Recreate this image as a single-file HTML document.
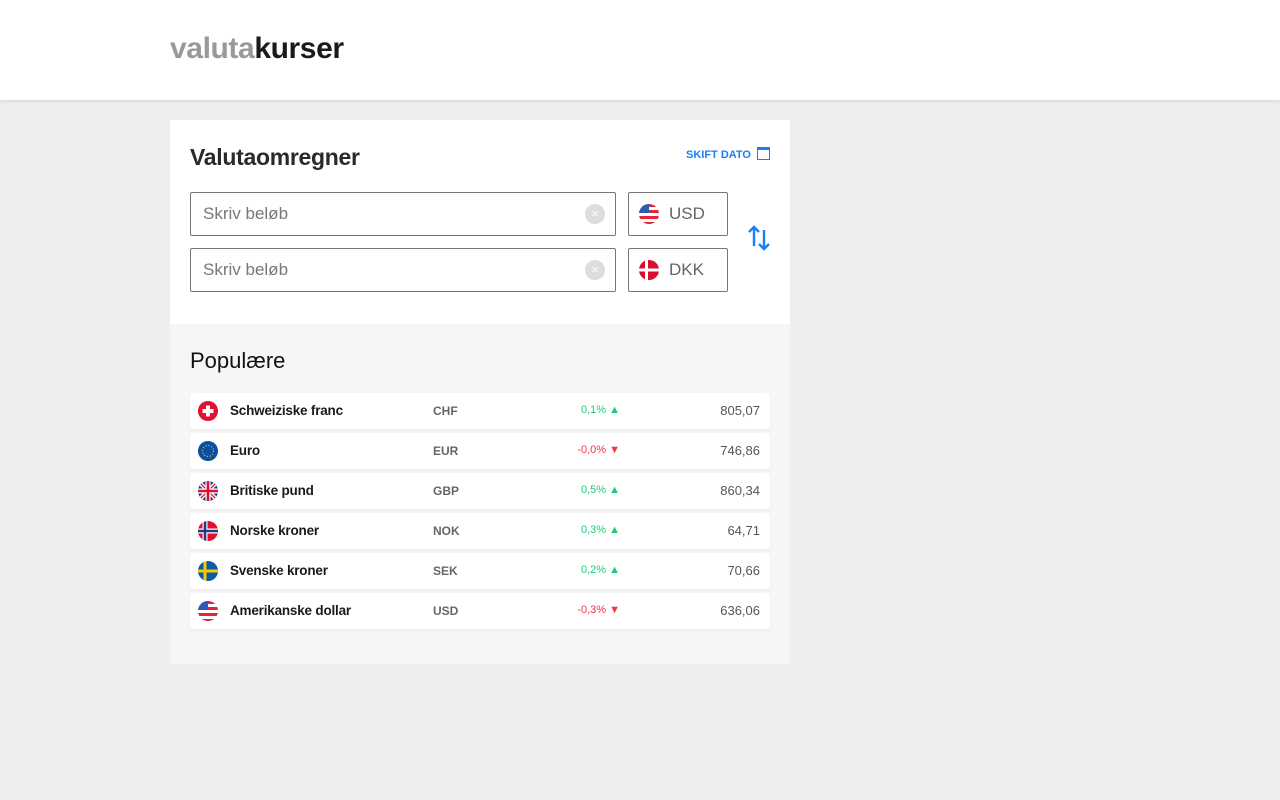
<!DOCTYPE html>
<html><head><meta charset="utf-8"><style>
*{box-sizing:border-box;margin:0;padding:0}
body{width:1280px;height:800px;background:#eee;font-family:"Liberation Sans",sans-serif;position:relative;overflow:hidden}
.hdr{position:absolute;left:0;top:0;width:1280px;height:100px;background:#fff;box-shadow:0 1px 4px rgba(0,0,0,.12)}
.logo{position:absolute;left:170px;top:32px;font-size:30px;font-weight:bold;letter-spacing:-0.4px}
.logo .a{color:#999}.logo .b{color:#1a1a1a}
.card{position:absolute;left:170px;top:120px;width:620px;height:204px;background:#fff}
h1{position:absolute;left:20px;top:24px;font-size:23px;color:#2a2a2a;font-weight:bold;letter-spacing:-.3px}
.skift{position:absolute;left:516px;top:29px;font-size:11px;font-weight:bold;color:#1a7ef5}
.cal{position:absolute;left:587px;top:27px;width:13px;height:13px;border:1.5px solid #1a7ef5;border-top-width:3px}
.inp{position:absolute;left:20px;width:426px;height:44px;border:1px solid #777;border-radius:2px;font-size:17px;color:#777;padding:11px 12px}
.clr{position:absolute;right:10px;top:11px;width:20px;height:20px;border-radius:50%;background:#ddd;color:#fff;font-size:13px;text-align:center;line-height:20px}
.cur{position:absolute;left:458px;width:100px;height:44px;border:1px solid #777;border-radius:2px;font-size:17px;color:#666;padding:11px 0 0 40px}
.cur svg{position:absolute;left:10px;top:11px}
.pop{position:absolute;left:170px;top:324px;width:620px;height:340px;background:#f6f6f6}
h2{position:absolute;left:20px;top:24px;font-size:22px;color:#111;font-weight:normal}
.row{position:absolute;left:20px;width:580px;height:36px;background:#fff;border-radius:4px;box-shadow:0 1px 2px rgba(0,0,0,.06);font-size:13px}
.row svg{position:absolute;left:8px;top:8px}
.nm{position:absolute;left:40px;top:10px;font-weight:bold;color:#1a1a1a;font-size:13.5px;letter-spacing:-0.2px}
.cd{position:absolute;left:243px;top:11px;color:#666;font-size:12px;font-weight:bold}
.ch{position:absolute;right:150px;top:11px;font-size:11px}
.g{color:#1fcc7a}.r{color:#f0344b}
.v{position:absolute;right:10px;top:10px;color:#555;font-size:13px}
</style></head><body>
<div class="hdr"><div class="logo"><span class="a">valuta</span><span class="b">kurser</span></div></div>
<div class="card">
<h1>Valutaomregner</h1>
<div class="skift">SKIFT DATO</div><div class="cal"></div>
<div class="inp" style="top:72px">Skriv beløb<div class="clr">×</div></div>
<div class="inp" style="top:128px">Skriv beløb<div class="clr">×</div></div>
<div class="cur" style="top:72px"><svg width="20" height="20" viewBox="0 0 20 20"><clipPath id="c1"><circle cx="10" cy="10" r="10"/></clipPath><g clip-path="url(#c1)"><rect width="20" height="20" fill="#fff"/><rect y="0" width="20" height="3" fill="#e0263b"/><rect y="6" width="20" height="3" fill="#e0263b"/><rect y="12" width="20" height="3" fill="#e0263b"/><rect y="18" width="20" height="3" fill="#e0263b"/><rect width="10" height="9" fill="#2b5bb5"/></g></svg>USD</div>
<div class="cur" style="top:128px"><svg width="20" height="20" viewBox="0 0 20 20"><clipPath id="c2"><circle cx="10" cy="10" r="10"/></clipPath><g clip-path="url(#c2)"><rect width="20" height="20" fill="#d6102e"/><rect x="6" width="3" height="20" fill="#fff"/><rect y="8.5" width="20" height="3" fill="#fff"/></g></svg>DKK</div>
<svg style="position:absolute;left:578px;top:104px" width="22" height="28" viewBox="0 0 22 28"><path d="M6 22V3M1 8l5-5 5 5M16 6v19M11 20l5 5 5-5" stroke="#1a7ef5" stroke-width="2.4" fill="none"/></svg>
</div>
<div class="pop">
<h2>Populære</h2>
<div class="row" style="top:69px"><svg width="20" height="20"><circle cx="10" cy="10" r="10" fill="#e0102e"/><rect x="8" y="4.5" width="4" height="11" fill="#fff"/><rect x="4.5" y="8" width="11" height="4" fill="#fff"/></svg><span class="nm">Schweiziske franc</span><span class="cd">CHF</span><span class="ch g">0,1% ▲</span><span class="v">805,07</span></div>
<div class="row" style="top:109px"><svg width="20" height="20"><circle cx="10" cy="10" r="10" fill="#0a4ea6"/><circle cx="10" cy="10" r="5.5" fill="none" stroke="#f5c400" stroke-width="1.3" stroke-dasharray="1 1.9"/></svg><span class="nm">Euro</span><span class="cd">EUR</span><span class="ch r">-0,0% ▼</span><span class="v">746,86</span></div>
<div class="row" style="top:149px"><svg width="20" height="20"><clipPath id="c3"><circle cx="10" cy="10" r="10"/></clipPath><g clip-path="url(#c3)"><rect width="20" height="20" fill="#21438f"/><path d="M0 0L20 20M20 0L0 20" stroke="#fff" stroke-width="4"/><path d="M0 0L20 20M20 0L0 20" stroke="#d6102e" stroke-width="1.3"/><path d="M10 0V20M0 10H20" stroke="#fff" stroke-width="5"/><path d="M10 0V20M0 10H20" stroke="#d6102e" stroke-width="2.6"/></g></svg><span class="nm">Britiske pund</span><span class="cd">GBP</span><span class="ch g">0,5% ▲</span><span class="v">860,34</span></div>
<div class="row" style="top:189px"><svg width="20" height="20"><clipPath id="c4"><circle cx="10" cy="10" r="10"/></clipPath><g clip-path="url(#c4)"><rect width="20" height="20" fill="#e0102e"/><path d="M7 0V20M0 10H20" stroke="#fff" stroke-width="5"/><path d="M7 0V20M0 10H20" stroke="#1f3a8a" stroke-width="2.6"/></g></svg><span class="nm">Norske kroner</span><span class="cd">NOK</span><span class="ch g">0,3% ▲</span><span class="v">64,71</span></div>
<div class="row" style="top:229px"><svg width="20" height="20"><clipPath id="c5"><circle cx="10" cy="10" r="10"/></clipPath><g clip-path="url(#c5)"><rect width="20" height="20" fill="#0a5aa8"/><path d="M7 0V20M0 10H20" stroke="#fcc800" stroke-width="3"/></g></svg><span class="nm">Svenske kroner</span><span class="cd">SEK</span><span class="ch g">0,2% ▲</span><span class="v">70,66</span></div>
<div class="row" style="top:269px"><svg width="20" height="20"><clipPath id="c6"><circle cx="10" cy="10" r="10"/></clipPath><g clip-path="url(#c6)"><rect width="20" height="20" fill="#fff"/><rect y="0" width="20" height="3" fill="#e0263b"/><rect y="6" width="20" height="3" fill="#e0263b"/><rect y="12" width="20" height="3" fill="#e0263b"/><rect y="18" width="20" height="3" fill="#e0263b"/><rect width="10" height="9" fill="#2b5bb5"/></g></svg><span class="nm">Amerikanske dollar</span><span class="cd">USD</span><span class="ch r">-0,3% ▼</span><span class="v">636,06</span></div>
</div>
</body></html>
